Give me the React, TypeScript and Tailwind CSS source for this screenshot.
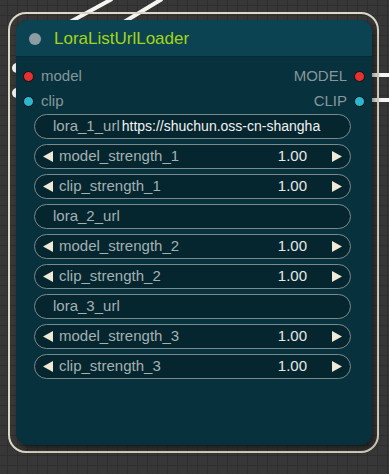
import React from 'react';

const FONT = { fontFamily: '"Liberation Sans", Arial, sans-serif' };

type Widget =
  | { kind: 'text'; name: string; value: string }
  | { kind: 'number'; name: string; value: string };

// url value is shown cut where the widget ends
const WIDGETS: Widget[] = [
  { kind: 'text', name: 'lora_1_url', value: 'https://shuchun.oss-cn-shangha' },
  { kind: 'number', name: 'model_strength_1', value: '1.00' },
  { kind: 'number', name: 'clip_strength_1', value: '1.00' },
  { kind: 'text', name: 'lora_2_url', value: '' },
  { kind: 'number', name: 'model_strength_2', value: '1.00' },
  { kind: 'number', name: 'clip_strength_2', value: '1.00' },
  { kind: 'text', name: 'lora_3_url', value: '' },
  { kind: 'number', name: 'model_strength_3', value: '1.00' },
  { kind: 'number', name: 'clip_strength_3', value: '1.00' },
];

const Arrow = ({ dir }: { dir: 'left' | 'right' }) => (
  <svg width="10" height="11" viewBox="0 0 10 11" className="shrink-0">
    {dir === 'left' ? (
      <polygon points="10,0 10,11 0,5.5" fill="#efe9d6" />
    ) : (
      <polygon points="0,0 0,11 10,5.5" fill="#efe9d6" />
    )}
  </svg>
);

const WidgetRow = ({ w }: { w: Widget }) => {
  if (w.kind === 'text') {
    return (
      <div className="h-[25px] rounded-full border border-[#7b8a8d] bg-[#05262f] flex items-center pl-[18px] pr-[14px]">
        <span className="text-[#a4b1b3] shrink-0">{w.name}</span>
        <span className="ml-[2px] text-[14px] text-[#f2f2f2] whitespace-nowrap">{w.value}</span>
      </div>
    );
  }
  return (
    <div className="h-[25px] rounded-full border border-[#7b8a8d] bg-[#05262f] flex items-center pl-[8px] pr-[8px]">
      <Arrow dir="left" />
      <span className="ml-[6px] text-[#a4b1b3] flex-1">{w.name}</span>
      <span className="text-[#e8e8e8] mr-[25px]">{w.value}</span>
      <Arrow dir="right" />
    </div>
  );
};

const Slot = ({ label, color, side }: { label: string; color: string; side: 'in' | 'out' }) => (
  <div className={`h-[25px] flex items-center gap-[7px] ${side === 'out' ? 'flex-row-reverse' : ''}`}>
    <span
      className="w-[11px] h-[11px] rounded-full border border-[#111] shrink-0"
      style={{ backgroundColor: color }}
    />
    <span className="text-[#86979b]">{label}</span>
  </div>
);

export default function App() {
  return (
    <div
      className="relative w-[389px] h-[474px] overflow-hidden bg-[#373737] bg-[linear-gradient(#2e2e2e_1px,transparent_1px),linear-gradient(90deg,#2e2e2e_1px,transparent_1px)] bg-[size:10px_10px] bg-[position:7px_5px]"
      style={FONT}
    >
      {/* links behind the node */}
      <svg className="absolute inset-0" width="389" height="474">
        <line x1="70" y1="22" x2="112" y2="-1" stroke="#f4f4f0" strokeWidth="4" />
        <line x1="124" y1="22" x2="162" y2="-1" stroke="#f4f4f0" strokeWidth="4" />
        <circle cx="17" cy="68" r="5" fill="#f4f4f0" />
        <circle cx="17" cy="93" r="5" fill="#f4f4f0" />
        <line x1="368" y1="75" x2="389" y2="75" stroke="#f4f4f0" strokeWidth="4" />
        <line x1="368" y1="100" x2="389" y2="100" stroke="#f4f4f0" strokeWidth="4" />
      </svg>

      <div className="relative ml-[8px] mt-[12px] w-[371px] h-[441px] rounded-[18px] border-2 border-[#dcd8c6] p-[6px]">
        <div className="w-[356px] h-[425px] rounded-[12px] bg-[#07313c] shadow-[3px_4px_6px_rgba(0,0,0,0.45)] overflow-hidden flex flex-col">
          {/* title */}
          <div className="h-[37px] shrink-0 bg-[#0b4352] border-b border-[#062a34] flex items-center pl-[13px] gap-[13px] pt-[1px]">
            <span className="w-[12px] h-[12px] rounded-full bg-[#8d9ea3]" />
            <span className="text-[17px] text-[#a3d516]">LoraListUrlLoader</span>
          </div>

          {/* slots */}
          <div className="text-[15px] pt-[7px] px-[7px] flex justify-between">
            <div className="flex flex-col">
              <Slot label="model" color="#e23232" side="in" />
              <Slot label="clip" color="#2bb8cf" side="in" />
            </div>
            <div className="flex flex-col items-end">
              <Slot label="MODEL" color="#e23232" side="out" />
              <Slot label="CLIP" color="#2bb8cf" side="out" />
            </div>
          </div>

          {/* widgets */}
          <div className="text-[15px] pl-[18px] pr-[21px] flex flex-col gap-[5px]">
            {WIDGETS.map((w) => (
              <WidgetRow key={w.name} w={w} />
            ))}
          </div>
        </div>
      </div>
    </div>
  );
}
